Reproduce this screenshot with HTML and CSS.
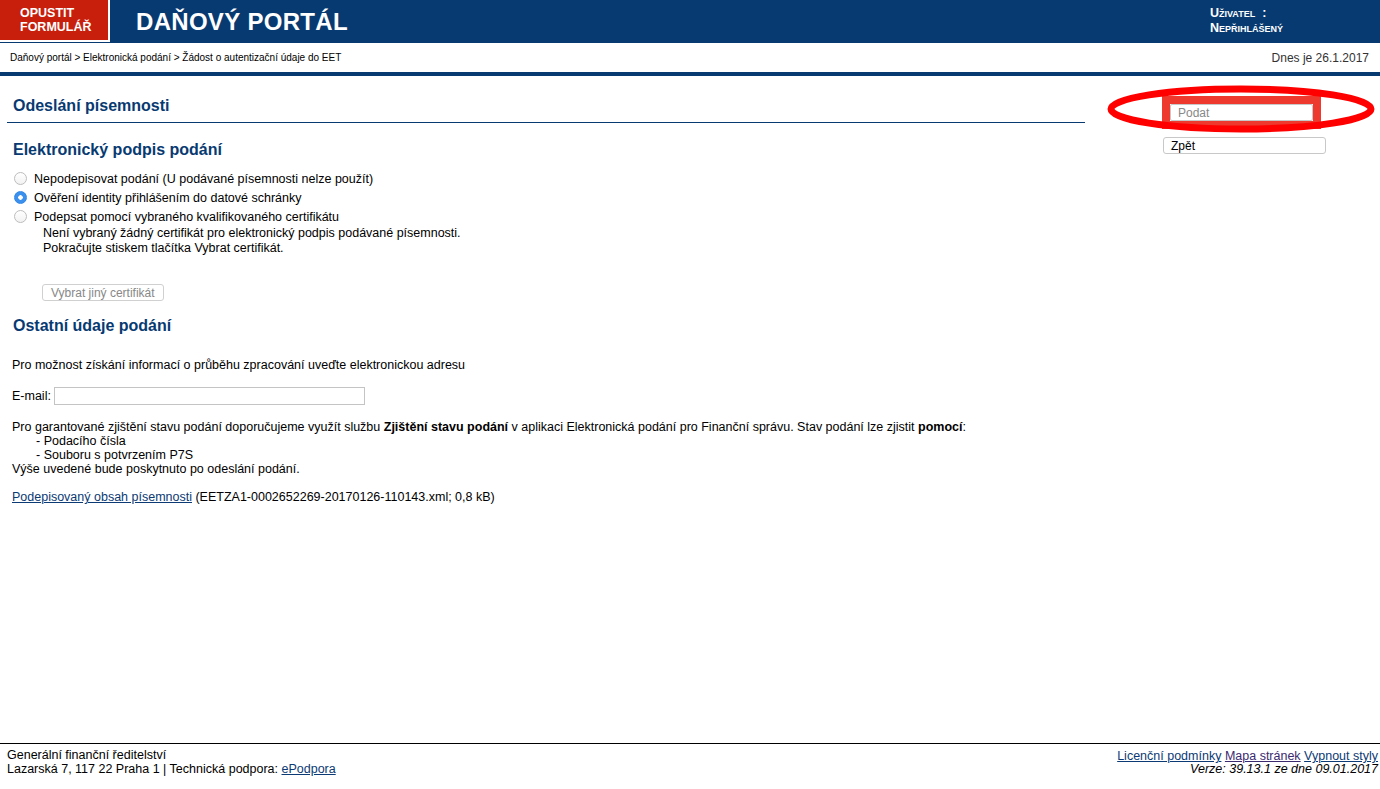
FILE: index.html
```html
<!DOCTYPE html>
<html lang="cs">
<head>
  <meta charset="UTF-8" />
  <title>Daňový portál - Odeslání písemnosti</title>
  <link rel="stylesheet" href="styles.css">
</head>
<body>

  <!-- Hlavička -->
  <div class="topbar">
    <a class="leave" href="#">Opustit<br>formulář</a>
    <div class="portal-title">DAŇOVÝ PORTÁL</div>
    <div class="user">Uživatel&nbsp; :<br>Nepřihlášený</div>
  </div>
  <div class="crumbs">
    <div>Daňový portál &gt; Elektronická podání &gt; Žádost o autentizační údaje do EET</div>
    <div class="today">Dnes je 26.1.2017</div>
  </div>

  <div class="page">
    <div class="main">
      <h2 class="section-title">Odeslání písemnosti</h2>

      <h3>Elektronický podpis podání</h3>
      <form class="sign-form">
        <label class="radio-row"><input type="radio" name="podpis"> Nepodepisovat podání (U podávané písemnosti nelze použít)</label>
        <label class="radio-row"><input type="radio" name="podpis" checked> Ověření identity přihlášením do datové schránky</label>
        <label class="radio-row"><input type="radio" name="podpis"> Podepsat pomocí vybraného kvalifikovaného certifikátu</label>
        <div class="cert-note">
          Není vybraný žádný certifikát pro elektronický podpis podávané písemnosti.<br>
          Pokračujte stiskem tlačítka Vybrat certifikát.
        </div>
        <button type="button" class="small-button" disabled>Vybrat jiný certifikát</button>
      </form>

      <h3 class="other-title">Ostatní údaje podání</h3>
      <p class="info">Pro možnost získání informací o průběhu zpracování uveďte elektronickou adresu</p>
      <div class="email-row">
        <label for="email">E-mail:</label>
        <input type="text" id="email" class="email-input">
      </div>

      <div class="state-info">
        Pro garantované zjištění stavu podání doporučujeme využít službu <b>Zjištění stavu podání</b> v aplikaci Elektronická podání pro Finanční správu. Stav podání lze zjistit <b>pomocí</b>:
        <div class="indent">- Podacího čísla</div>
        <div class="indent">- Souboru s potvrzením P7S</div>
        Výše uvedené bude poskytnuto po odeslání podání.
      </div>

      <div class="content-link"><a href="#">Podepisovaný obsah písemnosti</a> (EETZA1-0002652269-20170126-110143.xml; 0,8 kB)</div>
    </div>

    <div class="side">
      <div class="mark">
        <button type="button" class="side-button submit">Podat</button>
        <!-- zvýraznění -->
        <svg class="ring" width="270" height="52" viewBox="0 0 270 52">
          <ellipse cx="134" cy="24" rx="130" ry="20" fill="none" stroke="#ff0000" stroke-width="7"/>
        </svg>
      </div>
      <button type="button" class="side-button back">Zpět</button>
    </div>
  </div>

  <div class="footer">
    <div class="footer-left">
      Generální finanční ředitelství<br>
      Lazarská 7, 117 22 Praha 1 | Technická podpora: <a href="#">ePodpora</a>
    </div>
    <div class="footer-right">
      <a href="#">Licenční podmínky</a> <a href="#" class="visited">Mapa stránek</a> <a href="#">Vypnout styly</a><br>
      <i>Verze: 39.13.1 ze dne 09.01.2017</i>
    </div>
  </div>

</body>
</html>
```

FILE: styles.css
```css
body {
  font-family: "Liberation Sans", Arial, sans-serif;
  font-size: 12.5px;
  margin: 0;
  color: #000;
  min-height: 100vh;
  display: flex;
  flex-direction: column;
}

a {
  color: #0b3a74;
}

/* Hlavička */
.topbar {
  height: 43px;
  background-color: #083a72;
  display: flex;
  align-items: center;
}

.leave {
  box-sizing: border-box;
  width: 110px;
  height: 42px;
  align-self: flex-start;
  background-color: #c81f0d;
  border-right: 2px solid #fff;
  border-bottom: 2px solid #fff;
  color: #fff;
  text-decoration: none;
  text-transform: uppercase;
  font-weight: bold;
  font-size: 12.5px;
  line-height: 14px;
  padding: 6px 0 0 20px;
}

.portal-title {
  margin-left: 26px;
  color: #fff;
  font-weight: bold;
  font-size: 24px;
  letter-spacing: 0.3px;
}

.user {
  margin-left: auto;
  width: 170px;
  color: #fff;
  font-weight: bold;
  font-size: 12.5px;
  font-variant: small-caps;
  line-height: 15px;
  margin-top: -2px;
}

.crumbs {
  height: 29px;
  display: flex;
  justify-content: space-between;
  align-items: center;
  padding: 0 11px 0 10px;
  font-size: 10px;
  border-bottom: 4px solid #083a72;
}

.today {
  font-size: 12px;
  color: #333;
}

/* Obsah */
.page {
  display: flex;
  padding: 0 7px;
}

.main {
  width: 1078px;
}

.section-title {
  margin: 20px 0 0;
  padding: 0 6px 6px;
  font-size: 16px;
  line-height: 20px;
  color: #083a72;
  border-bottom: 1px solid #083a72;
}

h3 {
  margin: 17px 0 9px;
  padding: 0 6px;
  font-size: 16px;
  line-height: 20px;
  color: #083a72;
}

.radio-row {
  display: flex;
  align-items: center;
  gap: 7px;
  height: 19px;
  padding-left: 7px;
}

.radio-row input {
  appearance: none;
  margin: 0;
  width: 13px;
  height: 13px;
  border: 1px solid #bdbdbd;
  border-radius: 50%;
  background: linear-gradient(#fff, #f2f2f2);
  box-sizing: border-box;
}

.radio-row input:checked {
  border-color: #2f86e8;
  background: radial-gradient(circle, #fff 2px, #3a90ec 2.5px);
}

.cert-note {
  padding-left: 36px;
  line-height: 15px;
}

.small-button {
  margin: 28px 0 0 35px;
  height: 17px;
  padding: 0 8px;
  font-family: "Liberation Sans", Arial, sans-serif;
  font-size: 12px;
  color: #888;
  background: #fff;
  border: 1px solid #d0d0d0;
  border-radius: 3px;
}

.other-title {
  margin-top: 15px;
}

.info {
  margin: 22px 0 0;
  padding-left: 5px;
  line-height: 14px;
}

.email-row {
  display: flex;
  align-items: center;
  gap: 3px;
  margin-top: 15px;
  padding-left: 5px;
}

.email-input {
  width: 311px;
  height: 18px;
  box-sizing: border-box;
  border: 1px solid #c4c4c4;
  margin: 0;
}

.state-info {
  margin-top: 15px;
  padding-left: 5px;
  line-height: 14px;
}

.indent {
  padding-left: 24px;
}

.content-link {
  margin-top: 14px;
  padding-left: 5px;
  line-height: 14px;
}

/* Pravý sloupec */
.side {
  margin-left: 77px;
  padding-top: 20px;
}

.mark {
  position: relative;
  width: 143px;
  border: 8px solid #ee3a2e;
}

.ring {
  position: absolute;
  left: -63px;
  top: -19px;
}

.side-button {
  display: block;
  height: 17px;
  padding: 0 7px;
  text-align: left;
  font-family: "Liberation Sans", Arial, sans-serif;
  font-size: 12px;
  background: #fff;
  border: 1px solid #c8c8c8;
  border-radius: 3px;
}

.submit {
  width: 143px;
  color: #888;
  border-radius: 2px;
}

.back {
  margin-top: 8px;
  margin-left: 1px;
  width: 163px;
  color: #000;
}

/* Patička */
.footer {
  margin-top: auto;
  height: 46px;
  border-top: 1px solid #000;
  display: flex;
  justify-content: space-between;
  padding: 4px 2px 0 7px;
  box-sizing: border-box;
  line-height: 14px;
}

.footer-right {
  text-align: right;
  padding-top: 2px;
  line-height: 13px;
}

.footer-right .visited {
  color: #3b2a6e;
}
```
